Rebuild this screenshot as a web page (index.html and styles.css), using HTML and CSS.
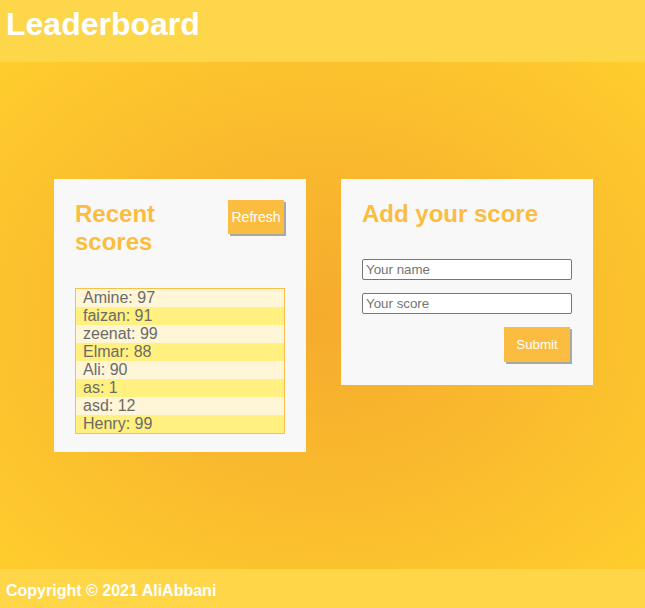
FILE: index.html
```html
<!DOCTYPE html>
<html>
<head>
<meta charset="utf-8">
<title>Leaderboard</title>
<link rel="stylesheet" href="styles.css">
</head>
<body>
<header class="top">
  <h1 class="brand">Leaderboard</h1>
</header>
<main class="main">
  <div class="cards">
    <section class="card">
      <div class="card-head">
        <h2 class="card-title">Recent scores</h2>
        <button class="btn btn-refresh" type="button">Refresh</button>
      </div>
      <ul class="scores">
        <li class="score">Amine: 97</li>
        <li class="score">faizan: 91</li>
        <li class="score">zeenat: 99</li>
        <li class="score">Elmar: 88</li>
        <li class="score">Ali: 90</li>
        <li class="score">as: 1</li>
        <li class="score">asd: 12</li>
        <li class="score">Henry: 99</li>
      </ul>
    </section>
    <section class="card card-form">
      <h2 class="card-title">Add your score</h2>
      <form class="form">
        <input class="field" type="text" placeholder="Your name">
        <input class="field" type="text" placeholder="Your score">
        <div class="form-actions">
          <button class="btn btn-submit" type="button">Submit</button>
        </div>
      </form>
    </section>
  </div>
</main>
<footer class="bottom">
  <p class="copy">Copyright © 2021 AliAbbani</p>
</footer>
</body>
</html>
```

FILE: styles.css
```css
* { box-sizing: border-box; }
html, body { height: 100%; }
body {
  margin: 0;
  font-family: "Liberation Sans", Arial, sans-serif;
  display: flex;
  flex-direction: column;
  min-height: 608px;
}
.top {
  background: #fdd649;
  height: 62px;
  padding: 6px 6px 0;
  flex: none;
}
.brand {
  margin: 0;
  color: #fff;
  font-size: 32px;
  font-weight: bold;
  line-height: 37px;
}
.main {
  flex: 1;
  display: flex;
  justify-content: center;
  align-items: center;
  background: radial-gradient(ellipse at 50% 50%, #f6ab2d 0%, #f9b92e 45%, #ffcd2d 100%);
}
.cards {
  display: flex;
  align-items: flex-start;
  gap: 35px;
  padding-left: 2px;
}
.card {
  width: 252px;
  background: #f8f8f8;
  padding: 21px 21px 18px;
}
.card-form { padding-bottom: 23px; }
.card-head {
  display: flex;
  justify-content: space-between;
  align-items: flex-start;
}
.card-title {
  margin: 0;
  color: #fbbd3f;
  font-size: 24px;
  line-height: 28px;
  font-weight: bold;
}
.btn {
  border: none;
  background: #fbbd3f;
  color: #fff;
  font-family: "Liberation Sans", Arial, sans-serif;
  font-size: 13.33px;
  box-shadow: 2px 2px 0 #a8a8a8;
  cursor: pointer;
}
.btn-refresh {
  width: 60px;
  height: 34px;
  padding: 0;
  margin-right: 1px;
  font-size: 14px;
}
.btn-submit {
  width: 66px;
  height: 35px;
  padding: 0;
  margin-right: 2px;
}
.scores {
  list-style: none;
  margin: 32px 0 0 0;
  padding: 0;
  border: 1px solid #f8c04a;
}
.score {
  height: 18px;
  line-height: 18px;
  font-size: 16px;
  color: #6b6b6b;
  padding-left: 7px;
  background: #fff5d7;
}
.score:nth-child(even) { background: #fff07f; }
.form {
  margin-top: 31px;
  display: flex;
  flex-direction: column;
  gap: 13px;
}
.field {
  width: 100%;
  height: 21px;
  font-family: "Liberation Sans", Arial, sans-serif;
  font-size: 13.33px;
  padding: 1px 3px;
  border: 1px solid #767676;
  border-radius: 2px;
  background: #fff;
}
.field::placeholder { color: #757575; }
.form-actions {
  display: flex;
  justify-content: flex-end;
}
.bottom {
  background: #fed647;
  height: 39px;
  padding: 13px 6px 0;
  flex: none;
}
.copy {
  margin: 0;
  color: #fff;
  font-size: 16px;
  font-weight: bold;
  line-height: 18px;
}
```
